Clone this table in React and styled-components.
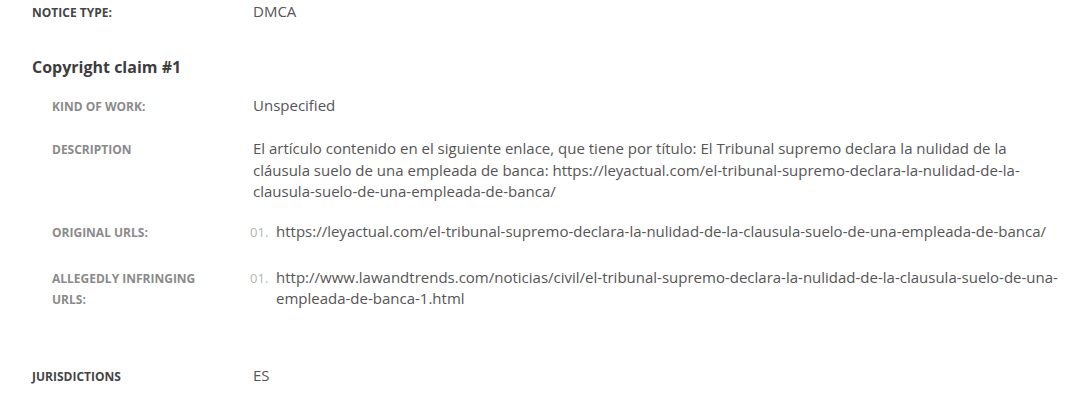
import styled, { createGlobalStyle } from 'styled-components';

const GlobalStyle = createGlobalStyle`
  html, body {
    margin: 0;
    padding: 0;
    background: #fff;
  }
  body {
    font-family: "Open Sans", "Liberation Sans", sans-serif;
  }
`;

const Page = styled.div`
  padding: 1px 0 0 32px;
  width: 1030px;
`;

const Row = styled.div`
  display: grid;
  grid-template-columns: ${({ $nested }) => ($nested ? '201px' : '221px')} 1fr;
  margin-top: ${({ $mt }) => $mt || 0}px;
  padding-left: ${({ $nested }) => ($nested ? '20px' : '0')};
`;

const Label = styled.div`
  font-size: 12px;
  font-weight: 700;
  text-transform: uppercase;
  line-height: 21px;
  padding-top: 1px;
  color: ${({ $nested }) => ($nested ? '#8a8a8a' : '#454545')};
  max-width: 160px;
`;

const Value = styled.div`
  font-size: 15px;
  line-height: 21.5px;
  color: #555;
`;

const Heading = styled.h3`
  margin: 33px 0 0;
  font-size: 16px;
  font-weight: 700;
  line-height: 22px;
  color: #3d3d3d;
`;

const UrlList = styled.ol`
  list-style: none;
  margin: 0 0 0 -3px;
  padding: 0;
`;

const UrlItem = styled.li`
  display: flex;
  align-items: baseline;
`;

const Num = styled.span`
  flex: 0 0 26px;
  font-size: 13px;
  color: #b4b4b4;
`;

const UrlText = styled.span`
  font-size: 15px;
  line-height: 21.5px;
  color: #555;
`;

const description =
  'El artículo contenido en el siguiente enlace, que tiene por título: El Tribunal supremo declara la nulidad de la ' +
  'cláusula suelo de una empleada de banca: https://leyactual.com/el-tribunal-supremo-declara-la-nulidad-de-la-' +
  'clausula-suelo-de-una-empleada-de-banca/';

function Urls({ items }) {
  return (
    <UrlList>
      {items.map((u, i) => (
        <UrlItem key={u}>
          <Num>{String(i + 1).padStart(2, '0')}.</Num>
          <UrlText>{u}</UrlText>
        </UrlItem>
      ))}
    </UrlList>
  );
}

export default function App() {
  return (
    <>
      <GlobalStyle />
      <Page>
        <Row>
          <Label>Notice Type:</Label>
          <Value>DMCA</Value>
        </Row>

        <Heading>Copyright claim #1</Heading>

        <Row $nested $mt={17}>
          <Label $nested>Kind of Work:</Label>
          <Value>Unspecified</Value>
        </Row>
        <Row $nested $mt={21}>
          <Label $nested>Description</Label>
          <Value>{description}</Value>
        </Row>
        <Row $nested $mt={18}>
          <Label $nested>Original URLs:</Label>
          <Urls items={['https://leyactual.com/el-tribunal-supremo-declara-la-nulidad-de-la-clausula-suelo-de-una-empleada-de-banca/']} />
        </Row>
        <Row $nested $mt={24}>
          <Label $nested>Allegedly Infringing URLs:</Label>
          <Urls items={['http://www.lawandtrends.com/noticias/civil/el-tribunal-supremo-declara-la-nulidad-de-la-clausula-suelo-de-una-empleada-de-banca-1.html']} />
        </Row>

        <Row $mt={55}>
          <Label>Jurisdictions</Label>
          <Value>ES</Value>
        </Row>
      </Page>
    </>
  );
}
